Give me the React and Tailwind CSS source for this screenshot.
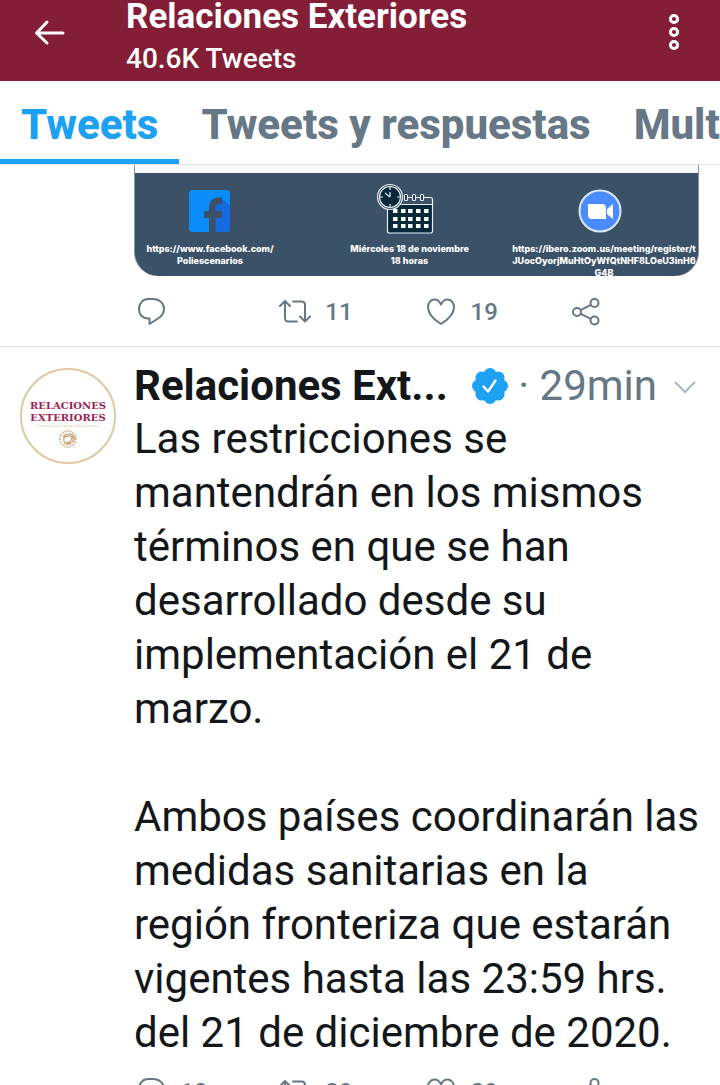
import React from 'react';

const BackIcon = () => (
  <svg className="h-8 w-8" viewBox="0 0 32 32" fill="none" stroke="currentColor" strokeWidth="3" strokeLinecap="round" strokeLinejoin="round">
    <path d="M30 17H4M14 6L3.500 17 14 27" />
  </svg>
);

const MoreIcon = () => (
  <svg className="h-10 w-4" viewBox="0 0 16 40" fill="none" stroke="currentColor" strokeWidth="3">
    <circle cx="8" cy="7" r="3.600" />
    <circle cx="8" cy="20" r="3.600" />
    <circle cx="8" cy="33" r="3.600" />
  </svg>
);

const iconProps = {
  className: 'h-8 w-8 shrink-0',
  viewBox: '0 0 32 32',
  fill: 'none',
  stroke: 'currentColor',
  strokeWidth: '2',
  strokeLinejoin: 'round',
};

const ReplyIcon = () => (
  <svg {...iconProps}>
    <path d="M14 3h5c6.600 0 11 4.300 11 10 0 4-2 7-6 9.500L15.500 28v-5.500C8.500 23 5 18.500 5 13 5 7.500 9 3 14 3z" />
  </svg>
);

const RetweetIcon = () => (
  <svg {...iconProps} strokeLinecap="round">
    <path d="M1 10l5-5 5 5M6 5v17c0 2.500 1 3.500 3.500 3.500H18M14 5.500h8.500C25 5.500 26 6.500 26 9v16M21 20.500l5 5 5-5" />
  </svg>
);

const HeartIcon = () => (
  <svg {...iconProps}>
    <path d="M16 28C9.500 24 3 17.500 3 11c0-4.500 3-7.500 6.500-7.500 3 0 5.200 2 6.500 5 1.300-3 3.500-5 6.500-5C26 3.500 29 6.500 29 11c0 6.500-6.500 13-13 17z" />
  </svg>
);

const ShareIcon = () => (
  <svg {...iconProps}>
    <circle cx="7" cy="16" r="4" />
    <circle cx="24.500" cy="7" r="4" />
    <circle cx="24.500" cy="24.500" r="4" />
    <path d="M10.600 14.200l10.300-5.400M10.600 17.800l10.300 5" />
  </svg>
);

const VerifiedIcon = () => (
  <svg className="h-10 w-10 shrink-0" viewBox="0 0 40 40">
    <g fill="#1da1f2">
      <circle cx="20" cy="20" r="14" />
      <circle cx="20" cy="8.500" r="6.500" />
      <circle cx="28.100" cy="11.900" r="6.500" />
      <circle cx="31.500" cy="20" r="6.500" />
      <circle cx="28.100" cy="28.100" r="6.500" />
      <circle cx="20" cy="31.500" r="6.500" />
      <circle cx="11.900" cy="28.100" r="6.500" />
      <circle cx="8.500" cy="20" r="6.500" />
      <circle cx="11.900" cy="11.900" r="6.500" />
    </g>
    <path d="M13.500 20.500l4.500 5 7.500-11" fill="none" stroke="#fff" strokeWidth="2.400" strokeLinecap="round" strokeLinejoin="round" />
  </svg>
);

const FacebookIcon = () => (
  <svg className="h-11 w-11" viewBox="0 0 44 44">
    <rect x="1" y="1" width="41" height="42" rx="4" fill="#0a8dfb" />
    <path d="M33 9l9 7v23a4 4 0 0 1-4 4H27V16z" fill="#1769e0" />
    <path d="M21 43V29h-5v-7h5v-3c0-7 4-10.500 9.500-10.500H34V15h-3c-2.500 0-3.500 1-3.500 3.500V22H34v7h-6.500v14z" fill="#3b5168" />
  </svg>
);

const columns = [19, 27, 34, 42, 50];
const rows = [28, 36, 43];

const CalendarIcon = () => (
  <svg className="h-[52px] w-[70px]" viewBox="0 0 70 52" fill="none" stroke="#e8eef2" strokeWidth="1.200">
    <rect x="12.500" y="14.500" width="45" height="35.500" rx="2" fill="#06283c" />
    <path d="M27 14h31v7H27z" fill="#3b5168" stroke="none" />
    <path d="M12.500 21.500h45M57.500 21.500v-5q0-2-2-2H49M33 14.500h4M41 14.500h4" />
    <rect x="29.500" y="11.500" width="3" height="6" rx="1" fill="#06283c" />
    <rect x="37.500" y="11.500" width="3" height="6" rx="1" fill="#06283c" />
    <rect x="45.500" y="11.500" width="3" height="6" rx="1" fill="#06283c" />
    {rows.map((y) => columns.map((x) => (
      <rect key={`${x}-${y}`} x={x - 1} y={y - 2} width="4.500" height="4" fill="#fff" stroke="none" />
    )))}
    <circle cx="15" cy="14" r="12.500" fill="#3b5168" />
    <circle cx="15" cy="14" r="10.500" fill="#06283c" />
    <path d="M15 14V9M15 14l-5-4M15 4v3M15 21v3M5 14h3M22 14h3" />
  </svg>
);

const ZoomIcon = () => (
  <svg className="h-11 w-11" viewBox="0 0 44 44">
    <circle cx="22" cy="22" r="20.500" fill="#4a8cff" stroke="#dce9f5" strokeWidth="2" />
    <path d="M10 15h14q4 0 4 4v11H14q-4 0-4-4zM29 20l6-5v15l-6-5z" fill="#fff" />
  </svg>
);

const Avatar = () => (
  <div className="flex h-24 w-24 shrink-0 flex-col items-center rounded-full border-2 border-[#dfc9a0] bg-white pt-[30px] font-['DejaVu_Serif',serif] text-[10px] leading-3 font-bold text-[#9b2350]">
    <span>RELACIONES</span>
    <span>EXTERIORES</span>
    <svg className="h-6 w-16" viewBox="0 0 64 24" fill="none" stroke="#c9ab7c">
      <path d="M1 2h62" strokeDasharray="2 1" opacity=".7" />
      <circle cx="32" cy="15" r="8" strokeWidth="2" strokeDasharray="1 1" />
      <path d="M27 13q4-5 9-2t0 7-7 1-1-5 5-2 2 4-4 1M36 10l2 8M28 19l7 1" strokeWidth="1.300" />
    </svg>
  </div>
);

const Action = ({ label, count, children }) => (
  <button type="button" aria-label={label} className="flex items-center gap-3.5">
    {children}
    {count && <span className="text-[24px] leading-8 font-medium">{count}</span>}
  </button>
);

const Actions = ({ replies, retweets, likes }) => (
  <div className="-mr-4 grid grid-cols-4 text-[#667786]">
    <Action label="Responder" count={replies}><ReplyIcon /></Action>
    <Action label="Retwittear" count={retweets}><RetweetIcon /></Action>
    <Action label="Me gusta" count={likes}><HeartIcon /></Action>
    <Action label="Compartir"><ShareIcon /></Action>
  </div>
);

const Header = () => (
  <header className="flex shrink-0 items-start bg-[#841d36] text-white">
    <button type="button" aria-label="Volver" className="w-[126px] shrink-0 pt-4 pl-[33px]">
      <BackIcon />
    </button>
    <div className="min-w-0 flex-1 pb-1">
      <h1 className="text-[35px] leading-[34px] font-bold whitespace-nowrap">Relaciones Exteriores</h1>
      <p className="pt-[7px] text-[28px] leading-9 font-medium">40.6K Tweets</p>
    </div>
    <button type="button" aria-label="Más opciones" className="shrink-0 pt-3 pr-[38px]">
      <MoreIcon />
    </button>
  </header>
);

const Tabs = () => (
  <nav className="flex shrink-0 overflow-hidden border-b border-[#dfe6ea] text-[42px] leading-[50px] font-extrabold whitespace-nowrap text-[#667786]">
    <a href="#tweets" className="border-b-[5px] border-[#1da1f2] px-[21px] pt-[19px] pb-[9px] text-[#1da1f2]">Tweets</a>
    <a href="#respuestas" className="px-[22px] pt-[19px]">Tweets y respuestas</a>
    <a href="#multimedia" className="px-[21px] pt-[19px]">Multimedia</a>
  </nav>
);

const Poster = () => (
  <div className="overflow-hidden rounded-b-3xl border-x border-[#8796a3] bg-[#3b5168] font-['Inter',sans-serif] text-[9px] leading-3 font-extrabold text-white">
    <div className="h-2 bg-[#f8f9f9]" />
    <div className="flex h-[103px] text-center">
      <div className="flex w-[150px] shrink-0 flex-col items-center pt-4">
        <FacebookIcon />
        <p className="pt-2.5">https://www.facebook.com/<br />Poliescenarios</p>
      </div>
      <div className="flex flex-1 flex-col items-center pt-2.5 pl-6">
        <CalendarIcon />
        <p className="pt-2">Miércoles 18 de noviembre<br />18 horas</p>
      </div>
      <div className="flex w-[188px] shrink-0 flex-col items-center pt-4">
        <div className="pr-2"><ZoomIcon /></div>
        <p className="pt-2.5 whitespace-nowrap">https://ibero.zoom.us/meeting/register/t<br />JUocOyorjMuHtOyWfQtNHF8LOeU3inH6<br />G4B</p>
      </div>
    </div>
  </div>
);

const App = () => (
  <div className="flex h-screen flex-col overflow-hidden bg-white font-['Roboto',sans-serif] text-[#14171a]">
    <Header />
    <Tabs />
    <main className="min-h-0 flex-1 overflow-hidden">
      <article className="border-b border-[#dfe6ea] pr-[21px] pb-[18px] pl-[134px]">
        <Poster />
        <div className="pt-5">
          <Actions retweets="11" likes="19" />
        </div>
      </article>
      <article className="flex gap-[18px] pt-[21px] pr-[21px] pl-5">
        <Avatar />
        <div className="min-w-0 flex-1">
          <div className="flex h-9 items-center whitespace-nowrap">
            <h2 className="text-[42px] leading-9 font-bold">Relaciones Ext...</h2>
            <span className="flex flex-1 items-center justify-end gap-2 pr-0.5 text-[42px] leading-9 text-[#667786]">
              <VerifiedIcon />
              <span>· 29min</span>
              <svg className="ml-2 h-6 w-6" viewBox="0 0 24 24" fill="none" stroke="#aab8c2" strokeWidth="2">
                <path d="M2 8l10 10L22 8" />
              </svg>
            </span>
          </div>
          <div className="pt-2 text-[42px] leading-[54px]">
            <p>Las restricciones se mantendrán en los mismos términos en que se han desarrollado desde su implementación el 21 de marzo.</p>
            <p className="pt-[54px]">Ambos países coordinarán las medidas sanitarias en la región fronteriza que estarán vigentes hasta las 23:59 hrs. del 21 de diciembre de 2020.</p>
          </div>
          <div className="pt-4">
            <Actions replies="10" retweets="29" likes="89" />
          </div>
        </div>
      </article>
    </main>
  </div>
);

export default App;
